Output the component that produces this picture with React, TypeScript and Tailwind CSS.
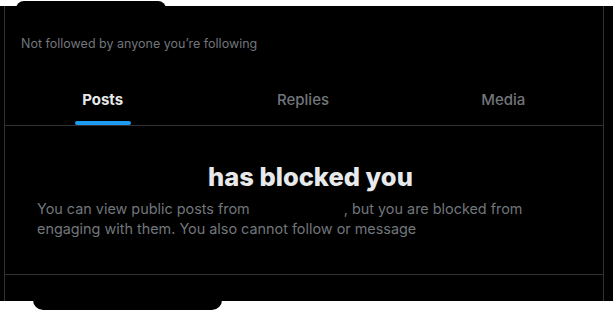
import React from "react";

export default function App() {
  const font = { fontFamily: "Inter, 'Liberation Sans', sans-serif" };
  return (
    <div className="relative w-[613px] h-[311px] bg-white overflow-hidden" style={font}>
      <div className="mt-[6px] h-[295px] w-full bg-black flex">
        <div className="ml-[4px] w-[600px] h-full border-x border-[#2f3336] flex flex-col">
          <div className="h-[67px] flex items-start">
            <p className="mt-[30px] ml-[16px] text-[12.5px] leading-[16px] text-[#71767b]">
              Not followed by anyone you’re following
            </p>
          </div>
          <div className="h-[53px] flex border-b border-[#2f3336]">
            <div className="flex-1 flex justify-center">
              <div className="relative h-full flex items-center pt-[2px] mr-[4px]">
                <span className="text-[15px] font-bold text-[#e7e9ea]">Posts</span>
                <div className="absolute bottom-0 left-1/2 -translate-x-1/2 w-[56px] h-[4px] rounded-full bg-[#1d9bf0]" />
              </div>
            </div>
            <div className="flex-1 flex justify-center items-center pt-[2px]">
              <span className="text-[15px] font-medium text-[#71767b] mr-[2px]">Replies</span>
            </div>
            <div className="flex-1 flex justify-center items-center pt-[2px]">
              <span className="text-[15px] font-medium text-[#71767b]">Media</span>
            </div>
          </div>
          <div className="h-[149px] border-b border-[#2f3336] pl-[32px] pt-[36px]">
            <h2 className="text-[25.5px] leading-[30px] font-extrabold text-[#e7e9ea] whitespace-nowrap">
              <span className="inline-block w-[171px] h-[1px]" />has blocked you
            </h2>
            <p className="mt-[7px] w-[495px] text-[14.4px] leading-[20px] text-[#71767b]">
              <span>You can view public posts from</span> <span className="inline-block w-[90px] h-[1px]" /><span>, but you are blocked from</span>{" "}
              <span>engaging with them. You also cannot follow or message</span> <span className="inline-block w-[60px] h-[1px]" />
            </p>
          </div>
        </div>
      </div>
      <div className="absolute left-[16px] top-[1px] w-[150px] h-[8px] rounded-t-[10px] bg-black" />
      <div className="absolute left-[33px] top-[297px] w-[189px] h-[13px] rounded-b-[10px] bg-black" />
    </div>
  );
}
